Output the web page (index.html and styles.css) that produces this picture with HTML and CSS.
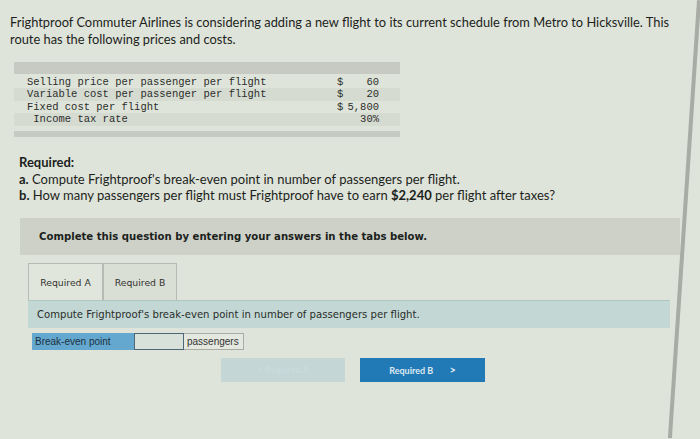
FILE: index.html
```html
<!DOCTYPE html>
<html>
<head>
<meta charset="utf-8">
<link rel="stylesheet" href="styles.css">
</head>
<body>
<div class="page">
  <p class="intro">Frightproof Commuter Airlines is considering adding a new flight to its current schedule from Metro to Hicksville. This route has the following prices and costs.</p>
  <div class="datatable">
    <div class="bar top"></div>
    <div class="row"><span class="lbl">Selling price per passenger per flight</span><span class="cur">$</span><span class="val">60</span></div>
    <div class="row shade"><span class="lbl">Variable cost per passenger per flight</span><span class="cur">$</span><span class="val">20</span></div>
    <div class="row"><span class="lbl">Fixed cost per flight</span><span class="cur">$</span><span class="val">5,800</span></div>
    <div class="row shade last"><span class="lbl">&nbsp;Income tax rate</span><span class="cur"></span><span class="val">30%</span></div>
    <div class="bar bottom"></div>
  </div>
  <div class="required">
    <div class="req-title">Required:</div>
    <div><b>a.</b> Compute Frightproof's break-even point in number of passengers per flight.</div>
    <div><b>b.</b> How many passengers per flight must Frightproof have to earn <b>$2,240</b> per flight after taxes?</div>
  </div>
  <div class="complete">Complete this question by entering your answers in the tabs below.</div>
  <div class="tabs">
    <div class="tab active">Required A</div>
    <div class="tab">Required B</div>
  </div>
  <div class="prompt">Compute Frightproof's break-even point in number of passengers per flight.</div>
  <div class="answer">
    <div class="ans-label">Break-even point</div>
    <div class="ans-input"></div>
    <div class="ans-unit">passengers</div>
  </div>
  <div class="nav">
    <div class="btn disabled">&lt; Required A</div>
    <div class="btn primary">Required B <span class="chev">&gt;</span></div>
  </div>
</div>
<div class="edge"></div>
</body>
</html>
```
FILE: styles.css
```css
html, body {
  margin: 0;
  padding: 0;
}
body {
  width: 700px;
  height: 439px;
  overflow: hidden;
  background: #dfe4da;
  font-family: "Lato", "Liberation Sans", sans-serif;
  color: #1c1f1c;
  position: relative;
}
.page {
  padding: 14px 0 0 10px;
}
.intro {
  margin: 0;
  font-size: 12.85px;
  line-height: 17px;
  width: 680px;
}
.datatable {
  margin: 14px 0 0 4px;
  width: 386px;
  font-family: "Liberation Mono", monospace;
  font-size: 10.5px;
  color: #2b2e2b;
}
.bar {
  background: #c6cac2;
}
.bar.top { height: 12px; }
.bar.bottom { height: 6px; margin-top: 5px; }
.row {
  display: flex;
  height: 12.3px;
  line-height: 12.3px;
  padding-left: 13px;
}
.datatable .row:nth-child(2) { margin-top: 2px; }
.row.shade { background: #d6dbd2; }
.row.last { height: 13.5px; }
.lbl { flex: 1; }
.cur { width: 10px; }
.val { width: 32px; text-align: right; padding-right: 21px; }
.required {
  margin-top: 17px;
  font-size: 13px;
  line-height: 16.5px;
  padding-left: 9px;
}
.req-title { font-weight: bold; }
.required b { font-weight: bold; }
.complete {
  margin: 14px 0 0 10px;
  width: 660px;
  height: 37px;
  background: #cdd1c8;
  font-family: "DejaVu Sans", sans-serif;
  font-weight: bold;
  font-size: 10.15px;
  line-height: 37px;
  padding-left: 19px;
  box-sizing: border-box;
}
.tabs {
  display: flex;
  margin: 8px 0 0 18px;
  height: 37px;
}
.tab {
  width: 72px;
  border: 1px solid #b7bbb3;
  border-bottom: none;
  font-family: "DejaVu Sans", sans-serif;
  font-size: 9.3px;
  line-height: 38px;
  text-align: center;
  color: #333;
  background: #dadfd5;
}
.tab.active {
  background: #e1e6dc;
  width: 73px;
}
.prompt {
  margin-left: 18px;
  width: 642px;
  height: 28px;
  background: #c3d8d4;
  border-top: 1px solid #b0c6c4;
  font-family: "DejaVu Sans", sans-serif;
  font-size: 10.1px;
  line-height: 28px;
  padding-left: 9px;
  box-sizing: border-box;
  color: #2a2d2a;
}
.answer {
  display: flex;
  margin: 5px 0 0 22px;
  height: 17px;
  font-size: 10px;
  font-family: "Liberation Sans", sans-serif;
}
.ans-label {
  width: 102px;
  background: #64a8cf;
  color: #1d3040;
  line-height: 17px;
  padding-left: 3px;
  box-sizing: border-box;
}
.ans-input {
  width: 50px;
  border: 1px solid #4f6878;
  background: #d9e2da;
  box-sizing: border-box;
}
.ans-unit {
  width: 60px;
  border: 1px solid #a9ada6;
  border-left: none;
  background: #e4e8df;
  line-height: 15px;
  padding-left: 3px;
  box-sizing: border-box;
  color: #333;
}
.nav {
  display: flex;
  gap: 15px;
  margin: 8px 0 0 211px;
}
.btn {
  width: 124px;
  height: 24px;
  line-height: 24px;
  text-align: center;
  font-size: 9px;
  font-weight: bold;
  font-family: "Lato", "Liberation Sans", sans-serif;
}
.btn.disabled {
  background: #c4d6d6;
  color: #cbdcdc;
}
.btn.primary {
  background: #2179b6;
  color: #dfe9f2;
  width: 125px;
}
.chev {
  margin-left: 14px;
  font-size: 11px;
}
.edge {
  position: absolute;
  left: 697px;
  top: 0;
  width: 4px;
  height: 439px;
  background: #a8aca4;
  transform: rotate(3.8deg);
  transform-origin: top left;
}
```
